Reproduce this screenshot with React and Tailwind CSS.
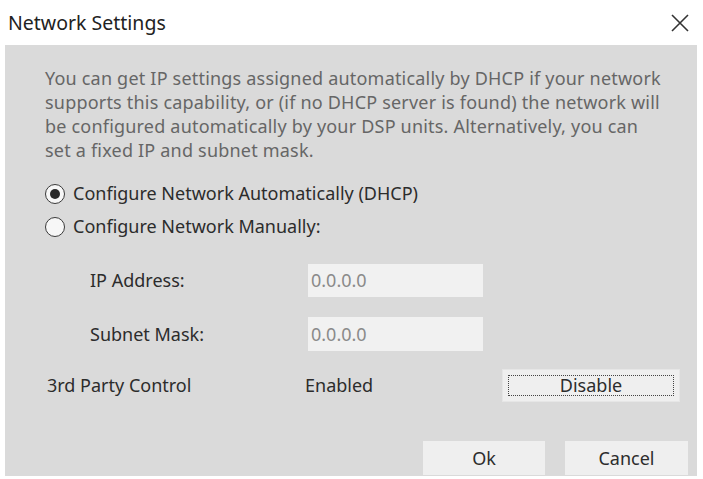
import React from "react";

function Radio({ checked }) {
  return (
    <span className="flex h-[20px] w-[20px] shrink-0 items-center justify-center rounded-full border-[1.5px] border-[#3a3a3a] bg-[#f7f7f7]">
      {checked && <span className="h-[10px] w-[10px] rounded-full bg-[#2a2a2a]" />}
    </span>
  );
}

export default function App() {
  return (
    <div
      className="relative h-[479px] w-[703px] overflow-hidden bg-white"
      style={{ fontFamily: '"Noto Sans", "Open Sans", sans-serif' }}
    >
      <div className="flex h-[45px] items-center justify-between pl-[8px] pr-[13px]">
        <span className="text-[19.5px] leading-none text-[#222]">Network Settings</span>
        <svg width="20" height="20" viewBox="0 0 20 20" className="text-[#333]">
          <path d="M2 2 L18 18 M18 2 L2 18" stroke="currentColor" strokeWidth="1.6" fill="none" />
        </svg>
      </div>
      <div className="ml-[5px] flex h-[431px] w-[692px] flex-col bg-[#dadada] pl-[40px] pr-[9px] pt-[21px]">
        <p className="whitespace-nowrap text-[18px] leading-[24px] tracking-[0.2px] text-[#666]">
          You can get IP settings assigned automatically by DHCP if your network
          <br />
          supports this capability, or (if no DHCP server is found) the network will
          <br />
          be configured automatically by your DSP units. Alternatively, you can
          <br />
          set a fixed IP and subnet mask.
        </p>
        <div className="mt-[15px] flex h-[33px] items-center gap-[8px] text-[18px] text-[#2c2c2c]">
          <Radio checked />
          <span>Configure Network Automatically (DHCP)</span>
        </div>
        <div className="flex h-[33px] items-center gap-[8px] text-[18px] text-[#2c2c2c]">
          <Radio />
          <span>Configure Network Manually:</span>
        </div>
        <div className="mt-[21px] flex h-[33px] items-center text-[18px] text-[#2c2c2c]">
          <span className="w-[263px] pl-[45px]">IP Address:</span>
          <div className="flex h-[33px] w-[175px] items-center bg-[#f1f1f1] pl-[3px] text-[#8a8a8a]">
            0.0.0.0
          </div>
        </div>
        <div className="mt-[20px] flex h-[34px] items-center text-[18px] text-[#2c2c2c]">
          <span className="w-[263px] pl-[45px]">Subnet Mask:</span>
          <div className="flex h-[34px] w-[175px] items-center bg-[#f1f1f1] pl-[3px] text-[#8a8a8a]">
            0.0.0.0
          </div>
        </div>
        <div className="mt-[18px] flex h-[33px] items-center text-[18px] text-[#2c2c2c]">
          <span className="w-[260px] pl-[2px]">3rd Party Control</span>
          <span className="w-[197px]">Enabled</span>
          <div className="flex h-[33px] w-[178px] items-center justify-center border border-[#e6e6e6] bg-[#efefef] p-[5px]">
            <div className="flex h-full w-full items-center justify-center border border-dotted border-[#444] text-[#2c2c2c]">
              Disable
            </div>
          </div>
        </div>
        <div className="mt-[39px] flex justify-end gap-[20px] text-[18px] text-[#2c2c2c]">
          <div className="flex h-[34px] w-[122px] items-center justify-center bg-[#efefef]">Ok</div>
          <div className="flex h-[34px] w-[123px] items-center justify-center bg-[#efefef]">Cancel</div>
        </div>
      </div>
    </div>
  );
}
